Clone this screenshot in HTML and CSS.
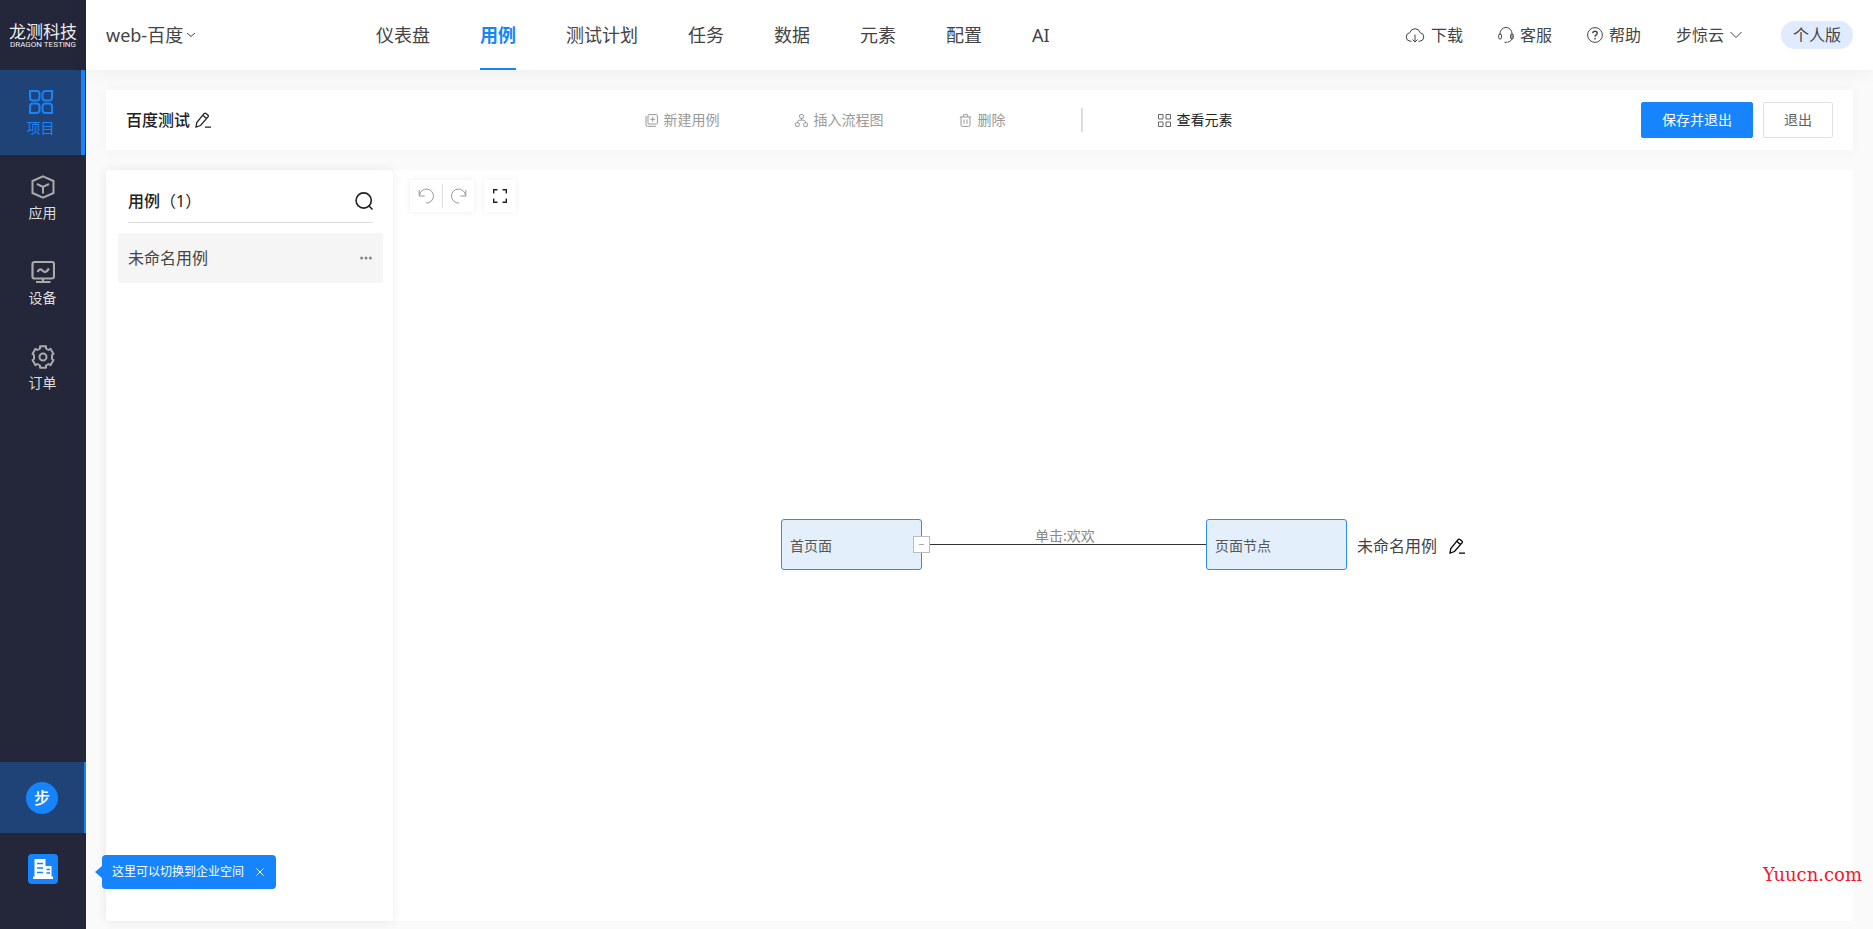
FILE: index.html
```html
<!DOCTYPE html>
<html lang="zh-CN">
<head>
<meta charset="utf-8">
<title>web-百度 - 用例</title>
<link rel="stylesheet" href="styles.css">
</head>
<body>
<div class="app">
  <aside class="sidebar">
    <div class="logo"><span class="logo-name">龙测科技</span><span class="logo-sub">DRAGON TESTING</span></div>
    <nav class="side-nav">
      <a class="side-item active" href="#">
        <svg class="icon-lg" viewBox="0 0 24 24" stroke-width="2"><path d="M1 1h6.500a3 3 0 0 1 3 3v3.500a3 3 0 0 1-3 3H4a3 3 0 0 1-3-3zM23 1h-6.500a3 3 0 0 0-3 3v3.500a3 3 0 0 0 3 3H20a3 3 0 0 0 3-3zM1 23h6.500a3 3 0 0 0 3-3v-3.500a3 3 0 0 0-3-3H4a3 3 0 0 0-3 3zM23 23h-6.500a3 3 0 0 1-3-3v-3.500a3 3 0 0 1 3-3H20a3 3 0 0 1 3 3z"/></svg>
        <span>项目</span>
      </a>
      <a class="side-item" href="#">
        <svg class="icon-lg" viewBox="0 0 24 24" stroke-width="2"><path d="M12 1.300 22.500 6v12L12 22.700 1.500 18V6zM6 9l6 3 6-3M12 12v6.500"/></svg>
        <span>应用</span>
      </a>
      <a class="side-item" href="#">
        <svg class="icon-lg" viewBox="0 0 24 24" stroke-width="2.200"><rect x="1.500" y="2" width="21.500" height="16.500" rx="2"/><path d="M6.500 12c2-3.500 3.500-3 5.500-1s3.500 1 6-2.500M12 19v3M5 22h14.500"/></svg>
        <span>设备</span>
      </a>
      <a class="side-item" href="#">
        <svg class="icon-lg" viewBox="0 0 24 24" stroke-width="2" stroke-linejoin="round"><path d="M9 1.200h6v2.300l2.500 1.500 2-1.200 3 5.200-1.500 1v4l1.500 1-3 5.200-2-1.200-2.500 1.500v2.300H9v-2.300L6.500 19l-2 1.200-3-5.200 1.500-1v-4l-1.500-1 3-5.200 2 1.200L9 3.500z"/><circle cx="12" cy="12" r="3.500"/></svg>
        <span>订单</span>
      </a>
    </nav>
    <div class="spaces">
      <button class="space current" aria-label="个人空间"><span class="avatar">步</span></button>
      <button class="space" aria-label="企业空间">
        <span class="company"><svg viewBox="0 0 30 30"><path fill="#fff" d="M6.500 5h11v20h-11zM17 12h6.500v13H17zM5 22.500h20V25H5z"/><path stroke="#1684fc" stroke-width="1.500" fill="none" d="M9 9.500h6M9 14h6M9 18.500h6M18.500 15.500h3.500M18.500 19h3.500"/></svg></span>
      </button>
      <div class="tip" role="tooltip"><span>这里可以切换到企业空间</span>
        <button class="tip-close" aria-label="关闭"><svg viewBox="0 0 8 8"><path d="M.5.5l7 7M7.500.5l-7 7"/></svg></button>
      </div>
    </div>
  </aside>

  <div class="page">
    <header class="header">
      <button class="project"><span>web-百度</span><svg class="chev-sm" viewBox="0 0 8 8"><path d="M0 2l4 3.500L8 2"/></svg></button>
      <nav class="tabs">
        <a href="#">仪表盘</a><a class="selected" href="#">用例</a><a href="#">测试计划</a><a href="#">任务</a><a href="#">数据</a><a href="#">元素</a><a href="#">配置</a><a href="#">AI</a>
      </nav>
      <div class="tools">
        <a href="#"><svg class="icon-cloud" viewBox="0 0 20 16"><path d="M6.500 14.200H5A4.300 4.300 0 0 1 4.800 5.700a5.400 5.400 0 0 1 10.400 0A4.300 4.300 0 0 1 15 14.200h-1.500M10 7.500v7M7.500 12.500l2.500 2.500 2.500-2.500"/></svg>下载</a>
        <a href="#"><svg class="icon-md" viewBox="0 0 16 16"><path d="M2 8V6.500a6 6 0 0 1 12 0V11c0 2-1.500 3.500-4 4M6.500 15.300h3"/><rect x=".7" y="7" width="2.800" height="5" rx="1.300"/><rect x="12.500" y="7" width="2.800" height="5" rx="1.300"/></svg>客服</a>
        <a href="#"><svg class="icon-md" viewBox="0 0 16 16"><circle cx="8" cy="8" r="7.400"/><path stroke-width="1.400" d="M5.800 6.300c0-2.800 4.400-2.800 4.400 0C10.200 8 8 7.800 8 9.800M8 11v1.400"/></svg>帮助</a>
        <button class="user">步惊云<svg class="chev-md" viewBox="0 0 12 12"><path d="M.5 3 6 8.500 11.500 3"/></svg></button>
        <span class="plan">个人版</span>
      </div>
    </header>

    <main class="main">
      <section class="toolbar">
        <div class="title"><h1>百度测试</h1><button aria-label="编辑名称"><svg class="icon-md pencil" viewBox="0 0 16 16"><path d="M1 15l.8-4.500L9 1.700q1-1 2-.2l1.800 1.400q1 .9.200 2L5.500 13.500zM8 3.500l3.500 3M10 15.200h6"/></svg></button></div>
        <div class="actions">
          <button disabled><svg class="icon-sm" viewBox="0 0 13 13"><rect x="3" y=".6" width="9.400" height="9.400" rx="1"/><path d="M1 2v9q0 1.300 1.300 1.300H11M7.700 2.800v5M5.200 5.300h5"/></svg>新建用例</button>
          <button disabled><svg class="icon-sm" viewBox="0 0 13 13"><rect x="4.700" y=".6" width="3.600" height="3.600" rx=".5"/><rect x=".6" y="8.800" width="3.600" height="3.600" rx=".5"/><rect x="8.800" y="8.800" width="3.600" height="3.600" rx=".5"/><path d="M6.500 4v2M2.400 8.800V7.500L4 6.200h5l1.600 1.300v1.300"/></svg>插入流程图</button>
          <button disabled><svg class="icon-sm" viewBox="0 0 13 13"><path d="M.8 3h11.400M4 3l.5-2.300h4L9 3M2 3v8q0 1.400 1.400 1.400h6.200q1.400 0 1.400-1.400V3M5 5.500v4.300M8 5.500v4.300"/></svg>删除</button>
          <span class="divider"></span>
          <button class="elements"><svg class="icon-sm" viewBox="0 0 13 13"><path d="M.5.5h4.500v4.500H.5zM8 .5h4.500v4.500H8zM.5 8h4.500v4.500H.5zM8 8h4.500v4.500H8z"/></svg>查看元素</button>
        </div>
        <div class="buttons"><button class="btn primary">保存并退出</button><button class="btn">退出</button></div>
      </section>

      <div class="workspace">
        <section class="cases">
          <div class="cases-head"><h2>用例<span>（1）</span></h2><button aria-label="搜索"><svg viewBox="0 0 18 18"><circle cx="8.700" cy="8.500" r="7.600"/><path d="M13.500 13.500l4 4"/></svg></button></div>
          <div class="case"><span>未命名用例</span><button aria-label="更多"><svg viewBox="0 0 12 4"><circle cx="1.600" cy="2" r="1.500"/><circle cx="6" cy="2" r="1.500"/><circle cx="10.400" cy="2" r="1.500"/></svg></button></div>
        </section>
        <section class="canvas">
          <div class="canvas-tools">
            <div class="group">
              <button aria-label="撤销"><svg class="icon-md" viewBox="0 0 16 16"><path d="M1.200 2v6h5.500M1.500 7.500A7 7 0 1 1 8 15"/></svg></button>
              <button aria-label="重做"><svg class="icon-md" viewBox="0 0 16 16"><path d="M14.800 2v6H9.300M14.500 7.500A7 7 0 1 0 8 15"/></svg></button>
            </div>
            <div class="group full">
              <button aria-label="全屏"><svg class="icon-md" viewBox="0 0 16 16"><path d="M1.700 5.500V1.700h3.800M10.500 1.700h3.800v3.800M14.300 10.500v3.800h-3.800M5.500 14.300H1.700v-3.800"/></svg></button>
            </div>
          </div>
          <div class="node first">首页面<button class="fold" aria-label="折叠"></button></div>
          <div class="edge"><span>单击:欢欢</span></div>
          <div class="node second">页面节点</div>
          <div class="case-name"><span>未命名用例</span><button aria-label="编辑用例名"><svg class="icon-md pencil" viewBox="0 0 16 16"><path d="M1 15l.8-4.500L9 1.700q1-1 2-.2l1.800 1.400q1 .9.200 2L5.500 13.500zM8 3.500l3.500 3M10 15.200h6"/></svg></button></div>
        </section>
      </div>
    </main>
  </div>
  <span class="watermark">Yuucn.com</span>
</div>
</body>
</html>
```
FILE: styles.css
```css
* { box-sizing: border-box; }
body {
  margin: 0;
  font-family: "Noto Sans", "Noto Sans CJK SC", sans-serif;
  font-size: 14px;
  line-height: 20px;
  color: #444;
}
button { border: 0; padding: 0; background: none; font: inherit; color: inherit; display: flex; align-items: center; }
a { color: inherit; text-decoration: none; }
h1, h2 { margin: 0; font-size: 16px; font-weight: 500; color: #222; }
svg { display: block; fill: none; stroke: currentColor; flex: none; }

.app { display: flex; height: 100vh; background: #fafafa; }
.page { flex: 1; min-width: 0; display: flex; flex-direction: column; }

/* Sidebar */
.sidebar { width: 86px; flex: none; background: #24263a; color: #ddd; display: flex; flex-direction: column; }
.logo { height: 70px; padding-top: 2px; display: flex; flex-direction: column; align-items: center; justify-content: center; color: #eee; white-space: nowrap; }
.logo-name { font-size: 17px; line-height: 18px; }
.logo-sub { font: 400 8px/8px Roboto, sans-serif; }
.side-nav { flex: 1; width: 85px; }
.side-item { height: 85px; padding-top: 2px; display: flex; flex-direction: column; align-items: center; justify-content: center; gap: 4px; }
.side-item svg { stroke: #aaa; }
.side-item.active { background: #204377; color: #1684fc; border-right: 4px solid #1684fc; }
.side-item.active svg { stroke: #1684fc; }
.icon-lg { width: 24px; height: 24px; }
.spaces { position: relative; height: 167px; }
.space { width: 100%; height: 71px; justify-content: center; }
.space.current { background: #204377; border-right: 2px solid #1684fc; }
.avatar { width: 32px; height: 32px; border-radius: 50%; background: #1684fc; color: #fff; font-size: 16px; line-height: 32px; font-weight: 500; }
.company { width: 30px; height: 30px; border-radius: 4px; background: #1684fc; }
.company svg { stroke: none; }
.tip {
  position: absolute; left: 102px; top: 93px; z-index: 2; height: 34px; padding: 0 10px;
  display: flex; align-items: center; gap: 12px; white-space: nowrap;
  border-radius: 4px; background: #1684fc; color: #fff; font-size: 12px;
}
.tip::before { content: ""; position: absolute; left: -7px; top: 11px; border: solid transparent; border-width: 6px 7px 6px 0; border-right-color: #1684fc; }
.tip-close { width: 10px; }
.tip-close svg { width: 8px; height: 8px; }

/* Header */
.header { height: 70px; flex: none; padding: 0 20px; display: flex; align-items: stretch; background: #fff; box-shadow: 0 0 20px rgba(0, 0, 0, .06); white-space: nowrap; }
.project { width: 270px; gap: 4px; font-size: 18px; }
.chev-sm { width: 8px; height: 8px; }
.chev-md { width: 12px; height: 12px; }
.tabs { display: flex; flex: 1; gap: 50px; font-size: 18px; line-height: 70px; }
.tabs .selected { color: #1684fc; font-weight: 700; border-bottom: 2px solid #1684fc; }
.tools { display: flex; align-items: center; gap: 35px; font-size: 16px; }
.tools a, .user { display: flex; align-items: center; gap: 6px; }
.icon-cloud { width: 20px; height: 16px; }
.icon-md { width: 16px; height: 16px; }
.icon-sm { width: 13px; height: 13px; }
.plan { margin-left: 4px; padding: 0 12px; line-height: 28px; border-radius: 14px; background: #e0ebff; }

/* Toolbar */
.main { flex: 1; min-height: 0; padding: 20px 20px 8px; display: flex; flex-direction: column; gap: 20px; }
.toolbar { height: 60px; flex: none; padding: 0 20px; display: flex; align-items: center; background: #fff; box-shadow: 0 0 10px rgba(0, 0, 0, .04); white-space: nowrap; }
.title { width: 110px; display: flex; align-items: center; gap: 5px; color: #222; }
.pencil { stroke-width: 1.3; }
.actions { flex: 1; display: flex; align-items: center; justify-content: center; gap: 75px; }
.actions button { gap: 6px; color: #999; }
.actions .elements { color: #222; }
.elements svg { stroke: #666; }
.divider { width: 2px; height: 24px; background: #ddd; }
.buttons { display: flex; gap: 10px; }
.btn { height: 36px; padding: 0 20px; border: 1px solid #dcdfe6; border-radius: 2px; background: #fff; color: #606266; }
.btn.primary { border-color: #1684fc; background: #1684fc; color: #fff; }

/* Case list */
.workspace { flex: 1; min-height: 0; display: flex; }
.cases { width: 287px; z-index: 1; flex: none; padding: 10px 10px 10px 12px; border-radius: 4px; background: #fff; box-shadow: 0 0 12px rgba(0, 0, 0, .08); }
.cases-head { height: 43px; margin: 0 10px; display: flex; align-items: center; justify-content: space-between; border-bottom: 1px solid #ddd; }
.cases-head h2 span { font-weight: 400; }
.cases-head button { color: #222; }
.cases-head svg { width: 18px; height: 18px; stroke-width: 1.6; overflow: visible; }
.case { height: 50px; margin-top: 10px; padding: 0 10px; display: flex; align-items: center; justify-content: space-between; border-radius: 2px; background: #f5f5f5; font-size: 16px; }
.case svg { width: 14px; height: 4px; fill: #888; stroke: none; }

/* Flow canvas */
.canvas { position: relative; flex: 1; background: #fff; }
.canvas-tools { display: flex; gap: 10px; padding: 10px 17px; }
.group { height: 32px; display: flex; align-items: center; border-radius: 2px; background: #fff; box-shadow: 0 0 6px rgba(0, 0, 0, .08); color: #999; }
.group button { width: 32px; height: 24px; justify-content: center; }
.group button + button { border-left: 1px solid #ddd; }
.group.full { color: #222; }
.full svg { stroke-width: 1.4; }
.node { position: absolute; top: 349px; width: 141px; height: 51px; padding: 2px 8px 0; line-height: 48px; border: 1px solid #2b8cf5; border-radius: 3px; background: #e3effb; color: #555; }
.first { left: 388px; }
.second { left: 813px; }
.fold { position: absolute; right: -9px; top: 16px; width: 17px; height: 17px; justify-content: center; border: 1px solid #bbb; background: #fff; }
.fold::before { content: ""; width: 5px; height: 1px; background: #aaa; }
.edge { position: absolute; left: 537px; top: 374px; width: 276px; height: 1px; background: #333; color: #888; }
.edge span { position: absolute; left: 105px; bottom: -1px; line-height: 20px; }
.case-name { position: absolute; left: 964px; top: 366px; display: flex; align-items: center; gap: 12px; font-size: 16px; }
.case-name button { color: #000; }

.watermark { position: absolute; right: 11px; bottom: 44px; z-index: 3; font: 18px/20px "DejaVu Serif", serif; color: #f5142d; }
```
